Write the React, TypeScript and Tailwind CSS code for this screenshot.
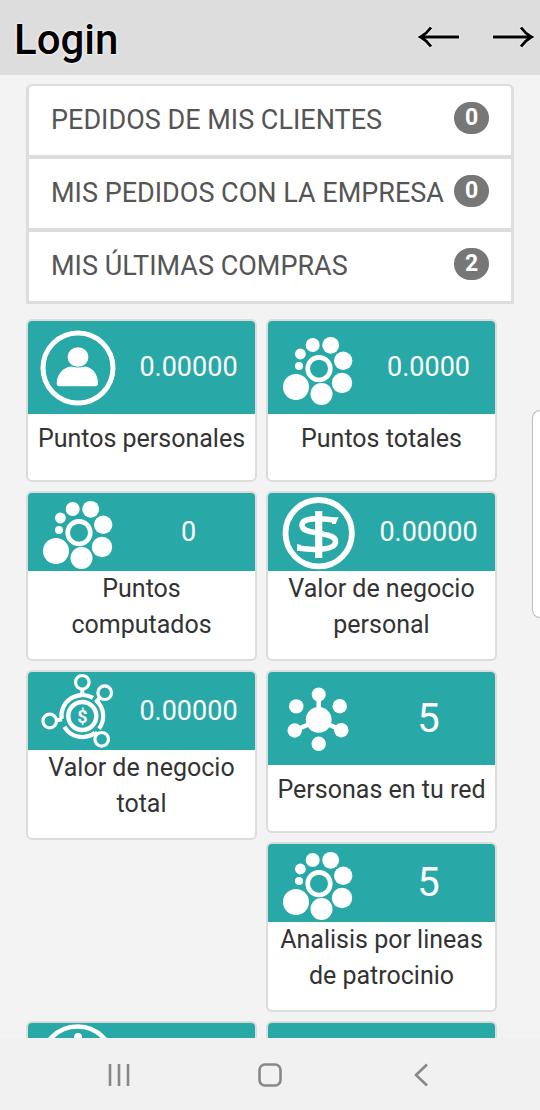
import type { ReactNode } from 'react';

type Tile = {
  icon?: ReactNode;
  value?: string;
  label?: string;
  big?: boolean;
  compact?: boolean;
};

const iconClass = 'h-[78px] w-[78px] shrink-0';

function PersonIcon() {
  return (
    <svg viewBox="0 0 78 78" className={iconClass} aria-hidden="true">
      <circle cx="40" cy="39" r="35" fill="none" stroke="#fff" strokeWidth="5" />
      <ellipse cx="40" cy="28" rx="10.4" ry="9.8" fill="#fff" />
      <path
        d="M18.7 54.5C18.7 45 25.5 38.6 33 37.6Q40 39.6 47 37.6C54.5 38.6 60 45 60 54.5Q60 57.3 57 57.3H21.7Q18.7 57.3 18.7 54.5Z"
        fill="#fff"
      />
    </svg>
  );
}

function ClusterIcon() {
  return (
    <svg viewBox="0 0 78 78" className={iconClass} fill="#fff" aria-hidden="true">
      <circle cx="41" cy="39.7" r="11.3" fill="none" stroke="#fff" strokeWidth="4.6" />
      <circle cx="34.7" cy="16" r="7" />
      <circle cx="52.7" cy="16.3" r="8.4" />
      <circle cx="65.2" cy="31.7" r="9.2" />
      <circle cx="64" cy="54" r="10.2" />
      <circle cx="43.5" cy="65" r="11" />
      <circle cx="18" cy="58" r="13" />
      <circle cx="21" cy="37" r="4" />
      <circle cx="22.4" cy="25" r="5.4" />
    </svg>
  );
}

function DollarIcon() {
  return (
    <svg viewBox="0 0 78 78" className={iconClass} fill="none" stroke="#fff" aria-hidden="true">
      <circle cx="40.7" cy="40.2" r="33.2" strokeWidth="5.8" />
      <path d="M40.7 18V65" strokeWidth="7.2" />
      <path
        d="M58.4 27.4C47 25.4 24 23.6 24 32C24 38.8 34 38.6 41 40.2C49 42 57.6 42.4 57.6 48.4C57.6 57.6 35 57.4 19.6 55"
        strokeWidth="5.4"
      />
      <path d="M60.6 24L57.6 31H54V25ZM19.2 51V58H23V52Z" fill="#fff" stroke="none" />
    </svg>
  );
}

function MoneyNetworkIcon() {
  return (
    <svg viewBox="0 0 78 78" className={iconClass} fill="none" stroke="#fff" aria-hidden="true">
      <circle cx="44.3" cy="44" r="14" strokeWidth="4.4" />
      <g strokeWidth="4.2">
        <path d="M23.6 47A21 21 0 0 1 55 25.9" />
        <path d="M58.4 28.6A21 21 0 0 1 61 56.7" />
        <path d="M26.4 54.8A21 21 0 0 0 57 60.8" />
      </g>
      <g strokeWidth="3.2">
        <circle cx="44.3" cy="10.3" r="6.8" />
        <circle cx="66.7" cy="20.7" r="6.8" />
        <circle cx="11.7" cy="49" r="6.8" />
        <circle cx="63.7" cy="67.3" r="6.8" />
        <path d="M44.3 17V24M62 25.6L57.6 30.4M18.4 48.4L24 47.4M59 62.5L56.6 60.4" strokeWidth="4" />
      </g>
      <text
        x="44.3"
        y="50.5"
        textAnchor="middle"
        className="fill-white stroke-none font-['Roboto',sans-serif] text-[18px] font-bold"
      >
        $
      </text>
    </svg>
  );
}

function PeopleNetworkIcon() {
  return (
    <svg viewBox="0 0 78 78" className={iconClass} fill="#fff" aria-hidden="true">
      <path d="M40.7 14.5V40L16.7 50.5M40.7 40L63.3 50.2" fill="none" stroke="#fff" strokeWidth="4.6" />
      <circle cx="40.7" cy="39.8" r="12.9" />
      <circle cx="40.7" cy="14.5" r="7" />
      <circle cx="18.3" cy="26.4" r="7.2" />
      <circle cx="61.7" cy="26.2" r="7.2" />
      <circle cx="16.7" cy="50.5" r="7.2" />
      <circle cx="63.3" cy="50.2" r="7.2" />
      <circle cx="40.7" cy="63.8" r="7.2" />
    </svg>
  );
}

function InfoRingIcon() {
  return (
    <svg viewBox="0 0 78 78" className={iconClass} fill="none" stroke="#fff" aria-hidden="true">
      <circle cx="39.5" cy="39.5" r="36" strokeWidth="4.5" />
      <path d="M40 14V60" strokeWidth="8" strokeLinecap="round" />
    </svg>
  );
}

const orders = [
  { label: 'PEDIDOS DE MIS CLIENTES', count: 0 },
  { label: 'MIS PEDIDOS CON LA EMPRESA', count: 0 },
  { label: 'MIS ÚLTIMAS COMPRAS', count: 2 },
];

// each row holds a left and a right stack of tiles
const rows: Tile[][][] = [
  [
    [{ icon: <PersonIcon />, value: '0.00000', label: 'Puntos personales' }],
    [{ icon: <ClusterIcon />, value: '0.0000', label: 'Puntos totales' }],
  ],
  [
    [{ icon: <ClusterIcon />, value: '0', label: 'Puntos computados', compact: true }],
    [{ icon: <DollarIcon />, value: '0.00000', label: 'Valor de negocio personal', compact: true }],
  ],
  [
    [{ icon: <MoneyNetworkIcon />, value: '0.00000', label: 'Valor de negocio total', compact: true }],
    [
      { icon: <PeopleNetworkIcon />, value: '5', label: 'Personas en tu red', big: true },
      { icon: <ClusterIcon />, value: '5', label: 'Analisis por lineas de patrocinio', big: true, compact: true },
    ],
  ],
  [[{ icon: <InfoRingIcon />, compact: true }], [{ compact: true }]],
];

function TileCard({ icon, value, label, big, compact }: Tile) {
  return (
    <article className="overflow-hidden rounded-md border-2 border-[#dcdcdc] bg-white">
      <div className={`flex items-center gap-1.5 bg-[#28a9a7] pl-2.5 text-white ${compact ? 'h-[78px]' : 'h-[93px]'}`}>
        {icon}
        <span className={`flex-1 text-center leading-none ${big ? 'text-[40px]' : 'text-[27px]'}`}>{value}</span>
      </div>
      {label && (
        <h2
          className={`px-1 text-center text-[25px] leading-9 text-[#333] ${compact ? 'pb-4' : 'pt-[7px] pb-[23px]'}`}
        >
          {label}
        </h2>
      )}
    </article>
  );
}

export default function App() {
  return (
    <div className="relative flex h-screen flex-col overflow-hidden bg-[#f3f3f3] font-['Roboto',sans-serif]">
      <header className="flex h-[75px] shrink-0 items-center justify-between bg-[#ddd] pr-1.5 pl-3.5 text-black">
        <h1 className="pt-1 text-[42px] leading-none font-medium [text-shadow:0_0_2px_#fff,0_0_3px_#fff]">Login</h1>
        <div className="flex gap-8 pb-0.5">
          <button type="button" aria-label="Atrás" className="drop-shadow-[0_0_1px_#fff]">
            <svg viewBox="0 0 42 22" className="h-[22px] w-[42px]" fill="none" stroke="currentColor" strokeWidth="2.8">
              <path d="M41 11H2.5M13 1.5C10.5 5 7 8.5 2.5 11C7 13.5 10.5 17 13 20.5" />
            </svg>
          </button>
          <button type="button" aria-label="Adelante" className="drop-shadow-[0_0_1px_#fff]">
            <svg viewBox="0 0 42 22" className="h-[22px] w-[42px]" fill="none" stroke="currentColor" strokeWidth="2.8">
              <path d="M1 11H39.5M29 1.5C31.5 5 35 8.5 39.5 11C35 13.5 31.5 17 29 20.5" />
            </svg>
          </button>
        </div>
      </header>

      <main className="flex-1 overflow-hidden pt-[9px]">
        <nav className="mx-[26px] divide-y-4 divide-[#ddd] rounded-t-md border-[3px] border-t-2 border-[#ddd] bg-white">
          {orders.map((o) => (
            <a
              key={o.label}
              href="#"
              className="box-content flex h-[69px] items-center justify-between px-[22px] text-[#555]"
            >
              <span className="text-[27px] leading-none whitespace-nowrap">{o.label}</span>
              <span className="mb-1.5 flex h-8 w-[35px] shrink-0 items-center justify-center rounded-2xl bg-[#777] text-[23px] leading-none font-bold text-white">
                {o.count}
              </span>
            </a>
          ))}
        </nav>

        <div className="mt-[15px] mr-[43px] ml-[26px] flex flex-col gap-[9px]">
          {rows.map((row, i) => (
            <div key={i} className="grid grid-cols-2 items-start gap-[9px]">
              {row.map((stack, j) => (
                <div key={j} className="flex flex-col gap-[9px]">
                  {stack.map((tile, k) => (
                    <TileCard key={k} {...tile} />
                  ))}
                </div>
              ))}
            </div>
          ))}
        </div>
      </main>

      {/* edge panel handle */}
      <div className="absolute top-[410px] right-0 h-[208px] w-2 rounded-l-lg border border-r-0 border-[#bbb] bg-white" />

      <footer className="grid h-[72px] shrink-0 grid-cols-3 bg-[#f1f1f1] px-11 pt-0.5 text-[#888]">
        <button type="button" aria-label="Recientes" className="flex items-center justify-center">
          <svg viewBox="0 0 24 24" className="h-6 w-6" fill="none" stroke="currentColor" strokeWidth="2.6">
            <path d="M3 1V23M12 1V23M21 1V23" />
          </svg>
        </button>
        <button type="button" aria-label="Inicio" className="flex items-center justify-center">
          <svg viewBox="0 0 24 24" className="h-6 w-6" fill="none" stroke="currentColor" strokeWidth="2.6">
            <rect x="1.5" y="1.5" width="21" height="21" rx="5.5" />
          </svg>
        </button>
        <button type="button" aria-label="Volver" className="flex items-center justify-center">
          <svg viewBox="0 0 24 24" className="h-6 w-6" fill="none" stroke="currentColor" strokeWidth="2.6">
            <path d="M18 1.5L7 12L18 22.5" />
          </svg>
        </button>
      </footer>
    </div>
  );
}
